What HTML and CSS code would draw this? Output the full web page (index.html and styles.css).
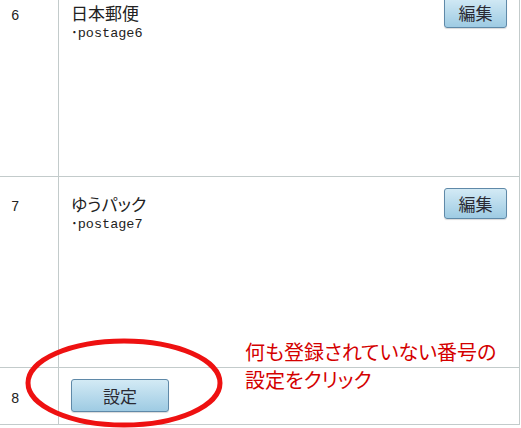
FILE: index.html
```html
<!DOCTYPE html>
<html lang="ja">
<head>
    <meta charset="UTF-8">
    <title>配送方法一覧</title>
    <link rel="stylesheet" href="styles.css">
</head>
<body>
    <div class="page">
        <table class="list">
            <tr class="row-tall">
                <td class="num">6</td>
                <td class="body">
                    <button class="btn btn-edit">編集</button>
                    <div class="name">日本郵便</div>
                    <div class="code">･postage6</div>
                </td>
            </tr>
            <tr class="row-tall">
                <td class="num">7</td>
                <td class="body">
                    <button class="btn btn-edit">編集</button>
                    <div class="name">ゆうパック</div>
                    <div class="code">･postage7</div>
                </td>
            </tr>
            <tr class="row-empty">
                <td class="num">8</td>
                <td class="body">
                    <button class="btn btn-set">設定</button>
                </td>
            </tr>
        </table>

        <!-- annotation drawn over the table -->
        <svg class="mark" width="260" height="98" viewBox="0 0 260 98">
            <ellipse cx="124" cy="53" rx="96" ry="42" fill="none" stroke="#ee1111" stroke-width="5"/>
        </svg>
        <p class="note">何も登録されていない番号の<br>設定をクリック</p>
    </div>
</body>
</html>
```

FILE: styles.css
```css
body {
    margin: 0;
    background-color: #ffffff;
    font-family: "Noto Sans CJK JP", sans-serif;
    color: #222222;
}

.page {
    position: relative;
    width: 521px;
    height: 428px;
    overflow: hidden;
}

/* List table, scrolled so row 6 is cut at the top */
.list {
    border-collapse: collapse;
    width: 520px;
    margin-top: -15px;
}

.list td {
    border: 1px solid #c3cbcb;
    vertical-align: baseline;
}

.list td.num {
    border-left: none;
    width: 47px;
    padding: 11px 0 0 11px;
    font-family: "Liberation Mono", monospace;
    font-size: 14px;
}

.list td.body {
    padding: 11px 12px 0 12px;
}

.row-tall td {
    height: 179px;
}

.row-empty td {
    height: 45px;
}

.name {
    font-size: 17px;
    line-height: 24px;
    margin-top: 4px;
    font-feature-settings: "palt";
}

.code {
    font-family: "Liberation Mono", "Noto Sans CJK JP", monospace;
    font-size: 13.5px;
    line-height: 18px;
}

/* Blue gradient buttons */
.btn {
    font-family: "Noto Sans CJK JP", sans-serif;
    font-size: 17px;
    color: #2a2a33;
    background: linear-gradient(#d3eaf5, #9ecbe3);
    border: 1px solid #5f89a8;
    border-radius: 3px;
    box-shadow: 0 1px 1px rgba(0, 0, 0, 0.15);
    padding: 0;
    line-height: 29px;
    cursor: pointer;
}

.btn-edit {
    float: right;
    width: 63px;
}

.btn-set {
    width: 98px;
    height: 33px;
}

.mark {
    position: absolute;
    left: 0;
    top: 330px;
}

.note {
    position: absolute;
    left: 245px;
    top: 338px;
    margin: 0;
    font-size: 20px;
    line-height: 28px;
    color: #d40000;
    font-feature-settings: "palt";
}
```
